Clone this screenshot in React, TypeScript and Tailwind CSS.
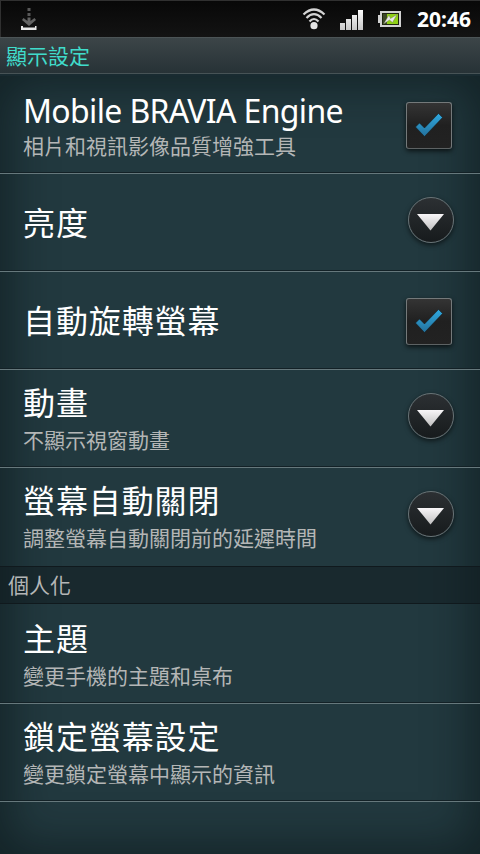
import React from 'react';
import clsx from 'clsx';

interface Setting {
  title: string;
  summary?: string;
  control?: 'checkbox' | 'menu';
}

const displaySettings: Setting[] = [
  { title: 'Mobile BRAVIA Engine', summary: '相片和視訊影像品質增強工具', control: 'checkbox' },
  { title: '亮度', control: 'menu' },
  { title: '自動旋轉螢幕', control: 'checkbox' },
  { title: '動畫', summary: '不顯示視窗動畫', control: 'menu' },
  { title: '螢幕自動關閉', summary: '調整螢幕自動關閉前的延遲時間', control: 'menu' },
];

const personalSettings: Setting[] = [
  { title: '主題', summary: '變更手機的主題和桌布' },
  { title: '鎖定螢幕設定', summary: '變更鎖定螢幕中顯示的資訊' },
];

const DownloadIcon = () => (
  <svg width="16" height="24" viewBox="0 0 16 24">
    <path d="M6.5 1h3v3h-3zM6.5 6h3v3h-3z" fill="#585858" />
    <path d="M6.5 10.500h3v3.500l4-3 1.500 2-7 6L1 13l1.500-2 4 3z" fill="#626262" />
    <path d="M0 19h2v1.500h12V19h1.500v4H0z" fill="#e6e6e6" />
  </svg>
);

const WifiIcon = () => (
  <svg width="24" height="24" viewBox="0 0 24 24" fill="none" stroke="#d4d4d4" strokeWidth="2.200">
    <path d="M1.500 7.500Q12 -2.500 22.500 7.500" />
    <path d="M4.500 11Q12 3.500 19.500 11" />
    <path d="M7.500 14.500Q12 9.500 16.500 14.500" />
    <circle cx="12" cy="18.700" r="3.600" fill="#e4e4e4" stroke="none" />
  </svg>
);

const SignalIcon = () => (
  <svg width="24" height="22" viewBox="0 0 24 22">
    <defs>
      <linearGradient id="bars" x1="0" y1="0" x2="0" y2="22" gradientUnits="userSpaceOnUse">
        <stop stopColor="#ffffff" />
        <stop offset="1" stopColor="#c4c4c4" />
      </linearGradient>
    </defs>
    <path d="M0 14h5v7H0zM6 10h5v11H6zM12 6h5v15h-5zM18 1h5v20h-5z" fill="url(#bars)" />
  </svg>
);

const BatteryIcon = () => (
  <svg width="24" height="18" viewBox="0 0 24 18">
    <path d="M2 0h21v16H2v-4H0V4h2z" fill="#d2d2d2" />
    <path d="M4 2h17v12H4z" fill="#20270f" />
    <path d="M8 3h12v10H8z" fill="#8fd016" />
    <path d="M5 3h4v10H5z" fill="#3c4726" />
    <path d="M5.500 13l5.500-9 1.500 3.500L19 3.500 14.500 11.500l-3-2.500z" fill="#eaeaea" stroke="#62703f" strokeWidth="0.400" />
  </svg>
);

const StatusBar = () => (
  <div className="flex h-[37px] items-center border-t border-l border-[#303030] bg-linear-to-b from-[#080808] to-[#131313] pt-px">
    <div className="ml-5 pb-px">
      <DownloadIcon />
    </div>
    <div className="ml-auto flex items-center">
      <div className="pb-0.5">
        <WifiIcon />
      </div>
      <div className="ml-3.5">
        <SignalIcon />
      </div>
      <div className="ml-3.5">
        <BatteryIcon />
      </div>
      <span className="ml-[15px] w-[63px] font-['Noto_Sans'] text-[21px] leading-none font-bold whitespace-nowrap text-white">20:46</span>
    </div>
  </div>
);

const CheckBox = () => (
  <div className="mr-7 mt-px flex h-[47px] w-[46px] items-center justify-center rounded-[3px] border border-[#74797a] border-b-[#5d6263] bg-linear-to-b from-[#343434] via-[#202020] to-[#222222] shadow-[0_2px_5px_rgba(0,0,0,0.7)]">
    <svg width="28" height="24" viewBox="0 0 28 24">
      <defs>
        <linearGradient id="tick" x1="0" y1="0" x2="0" y2="1">
          <stop stopColor="#2fa9e0" />
          <stop offset="1" stopColor="#24719c" />
        </linearGradient>
      </defs>
      <path d="M.5 14 4.500 10 9.500 15 23.500 .5 27.500 4.500 9.500 23.500z" fill="url(#tick)" stroke="#14191b" strokeWidth="0.500" />
    </svg>
  </div>
);

const MenuButton = () => (
  <div className="mr-[26px] mb-1.5 flex h-[46px] w-[46px] items-center justify-center rounded-full border border-[#697376] bg-linear-to-b from-[#2c3033] to-[#171b1d] pt-1 pr-px shadow-[0_2px_5px_rgba(0,0,0,0.6)]">
    <svg width="27" height="18" viewBox="0 0 27 18">
      <defs>
        <linearGradient id="arrow" x1="0" y1="0" x2="0" y2="1">
          <stop stopColor="#f8f6f8" />
          <stop offset="1" stopColor="#c0c0c0" />
        </linearGradient>
      </defs>
      <path d="M0 1h27L13.500 17.500z" fill="url(#arrow)" />
    </svg>
  </div>
);

const SettingRow: React.FC<Setting & { last?: boolean }> = ({ title, summary, control, last }) => {
  const latin = /^[A-Za-z ]+$/.test(title);
  return (
    <div
      className={clsx(
        'flex h-[98px] items-center border-b pl-[23px]',
        last ? 'border-transparent' : 'border-[#66787c] shadow-[inset_0_-1px_0_#132126]',
      )}
    >
      <div className="min-w-0 flex-1 pb-1 whitespace-nowrap">
        <div
          className={clsx(
            'text-white',
            latin
              ? "pt-1 font-['Noto_Sans'] text-[32px] leading-[40px] tracking-[-0.65px]"
              : 'text-[32px] leading-[44px] tracking-[0.9px]',
            !latin && summary && '-mt-0.5 pb-0.5',
          )}
        >
          {title}
        </div>
        {summary && <div className="text-[21px] leading-[28px] text-[#b4b6b6]">{summary}</div>}
      </div>
      {control === 'checkbox' && <CheckBox />}
      {control === 'menu' && <MenuButton />}
    </div>
  );
};

export default function App() {
  return (
    <div className="flex h-[854px] w-[480px] flex-col overflow-hidden bg-[#22393f] font-['Noto_Sans_CJK_TC',sans-serif]">
      <StatusBar />
      <div className="flex h-[37px] items-center border-t border-b border-t-[#4c5456] border-b-[#475356] bg-linear-to-b from-[#3c4548] to-[#273236] pl-1.5 text-[21px] leading-none text-[#40dccb]">
        顯示設定
      </div>
      <main className="flex-1 border-t-2 border-[#192b31] shadow-[inset_0_0_45px_8px_rgba(8,16,19,0.55)]">
        {displaySettings.map((item, i) => (
          <SettingRow key={item.title} {...item} last={i === displaySettings.length - 1} />
        ))}
        <div className="mb-0.5 flex h-[38px] items-center border-t border-b border-[#10191d] bg-[#10191d]/50 pb-0.5 pl-2 text-[21px] leading-none text-[#b4b6b6]">
          個人化
        </div>
        {personalSettings.map((item) => (
          <SettingRow key={item.title} {...item} />
        ))}
      </main>
    </div>
  );
}
